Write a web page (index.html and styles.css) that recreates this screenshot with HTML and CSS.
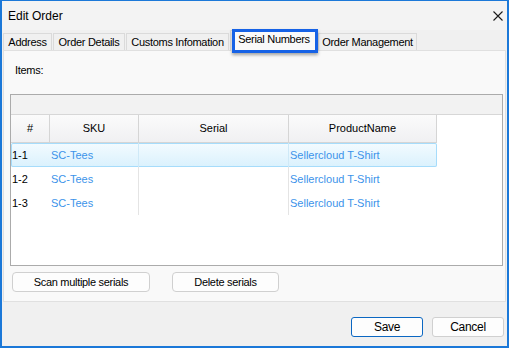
FILE: index.html
```html
<!DOCTYPE html>
<html lang="en">
<head>
    <meta charset="UTF-8">
    <meta name="viewport" content="width=device-width, initial-scale=1.0">
    <title>Edit Order</title>
    <link rel="stylesheet" href="styles.css">
</head>
<body>
    <div class="window">
        <div class="titlebar">
            <span class="title">Edit Order</span>
            <svg class="close" width="10" height="10" viewBox="0 0 10 10">
                <path d="M0.5 0.5 L9.5 9.5 M9.5 0.5 L0.5 9.5" stroke="#1a1a1a" stroke-width="1.1" fill="none"/>
            </svg>
        </div>

        <div class="tabs">
            <div class="tab tab-address">Address</div>
            <div class="tab tab-details">Order Details</div>
            <div class="tab tab-customs">Customs Infomation</div>
            <div class="tab tab-serials active">Serial Numbers</div>
            <div class="tab tab-management">Order Management</div>
        </div>

        <div class="panel">
            <div class="items-label">Items:</div>

            <div class="grid">
                <div class="group-band"></div>
                <div class="grid-row header">
                    <div class="cell">#</div>
                    <div class="cell">SKU</div>
                    <div class="cell">Serial</div>
                    <div class="cell">ProductName</div>
                </div>
                <div class="grid-row selected">
                    <div class="cell num">1-1</div>
                    <div class="cell link">SC-Tees</div>
                    <div class="cell sep"></div>
                    <div class="cell link">Sellercloud T-Shirt</div>
                </div>
                <div class="grid-row">
                    <div class="cell num">1-2</div>
                    <div class="cell link sep">SC-Tees</div>
                    <div class="cell sep"></div>
                    <div class="cell link">Sellercloud T-Shirt</div>
                </div>
                <div class="grid-row">
                    <div class="cell num">1-3</div>
                    <div class="cell link sep">SC-Tees</div>
                    <div class="cell sep"></div>
                    <div class="cell link">Sellercloud T-Shirt</div>
                </div>
            </div>

            <div class="actions">
                <button class="btn btn-scan">Scan multiple serials</button>
                <button class="btn btn-delete">Delete serials</button>
            </div>
        </div>

        <div class="footer">
            <button class="btn btn-footer primary">Save</button>
            <button class="btn btn-footer">Cancel</button>
        </div>
    </div>
</body>
</html>
```

FILE: styles.css
```css
body {
    margin: 0;
    font-family: "Liberation Sans", Arial, sans-serif;
    color: #000;
}
.window {
    box-sizing: border-box;
    width: 509px;
    height: 348px;
    border: 2px solid #1b78d8;
    border-top-width: 1px;
    background: #f0f0f0;
    display: flex;
    flex-direction: column;
}
.titlebar {
    height: 29px;
    flex: 0 0 auto;
    display: flex;
    align-items: center;
    justify-content: space-between;
    padding: 0 4px 0 6px;
    background: #f3f3f3;
    font-size: 12px;
}
.close {
    margin-top: 0;
}

/* tab strip */
.tabs {
    height: 20px;
    flex: 0 0 auto;
    display: flex;
    align-items: flex-end;
    padding-left: 1px;
    position: relative;
    z-index: 1;
    font-size: 11px;
    letter-spacing: -0.3px;
}
.tab {
    box-sizing: border-box;
    height: 17px;
    border: 1px solid #dadada;
    border-bottom: none;
    background: #f0f0f0;
    text-align: center;
    line-height: 16px;
}
.tab + .tab {
    margin-left: 1px;
}
.tab-address { width: 49px; }
.tab-details { width: 72px; }
.tab-customs { width: 103px; }
.tab-serials { width: 88px; }
.tab-management { width: 99px; }
.tab.active {
    position: relative;
    height: 21px;
    margin-bottom: -1px;
    background: #f9f9f9;
    line-height: 16px;
}
.tab.active + .tab {
    margin-left: 0;
}
.tab.active::after {
    content: "";
    position: absolute;
    left: 1px;
    right: -1px;
    top: -2px;
    bottom: -2px;
    border: 3px solid #1662e6;
    box-shadow: 0 2px 3px rgba(0, 0, 0, 0.35);
}

/* tab page */
.panel {
    box-sizing: border-box;
    height: 252px;
    flex: 0 0 auto;
    margin: 0 1px;
    border: 1px solid #e0e0e0;
    background: #f9f9f9;
    padding: 0 0 0 6px;
    font-size: 11px;
}
.items-label {
    margin: 12px 0 0 5px;
    height: 14px;
    line-height: 14px;
    letter-spacing: -0.3px;
}
.grid {
    box-sizing: border-box;
    width: 493px;
    height: 172px;
    margin-top: 17px;
    border: 1px solid #ababab;
    background: #fff;
}
.group-band {
    height: 19px;
    background: #f2f2f2;
    border-bottom: 1px solid #d7d7d7;
}
.grid-row {
    display: grid;
    grid-template-columns: 39px 89px 150px 148px;
    height: 24px;
    line-height: 24px;
}
.grid-row .cell {
    box-sizing: border-box;
    padding-left: 1px;
    white-space: nowrap;
    overflow: hidden;
}
.grid-row.header {
    height: 28px;
    line-height: 27px;
}
.grid-row.header .cell {
    text-align: center;
    padding: 0;
    background: linear-gradient(#fbfbfb, #f0f0f2);
    border-right: 1px solid #d5d5d5;
    border-bottom: 1px solid #d5d5d5;
}
.grid-row.header .cell:first-child {
    border-left: none;
}
.grid-row .cell.sep {
    border-right: 1px solid #e4e4e4;
}
.grid-row .cell.link {
    color: #3c93ea;
}
.grid-row.selected {
    width: 426px;
    background: linear-gradient(#f3fbff, #daf1fd);
    box-shadow: inset 0 0 0 1px #a6dcfb;
    border-radius: 2px;
}
.grid-row.selected .cell.sep {
    border-right-color: #cfe9f7;
}
.grid-row.selected .cell.link:nth-child(2) {
    border-right: 1px solid #cfe9f7;
}

/* buttons */
.btn {
    box-sizing: border-box;
    height: 20px;
    padding: 0;
    border: 1px solid #d0d0d0;
    border-radius: 4px;
    background: #fdfdfd;
    font-family: "Liberation Sans", Arial, sans-serif;
    font-size: 11px;
    letter-spacing: -0.3px;
    color: #000;
}
.actions {
    display: flex;
    margin: 6px 0 0 2px;
}
.btn-scan {
    width: 138px;
}
.btn-delete {
    width: 107px;
    margin-left: 22px;
}
.footer {
    flex: 1 1 auto;
    display: flex;
    justify-content: flex-end;
    padding: 15px 3px 0 0;
    background: #f0f0f0;
}
.btn-footer {
    width: 72px;
    font-size: 12px;
    border-radius: 3px;
}
.btn-footer + .btn-footer {
    margin-left: 9px;
}
.btn-footer.primary {
    border-color: #0b67c2;
}
```
